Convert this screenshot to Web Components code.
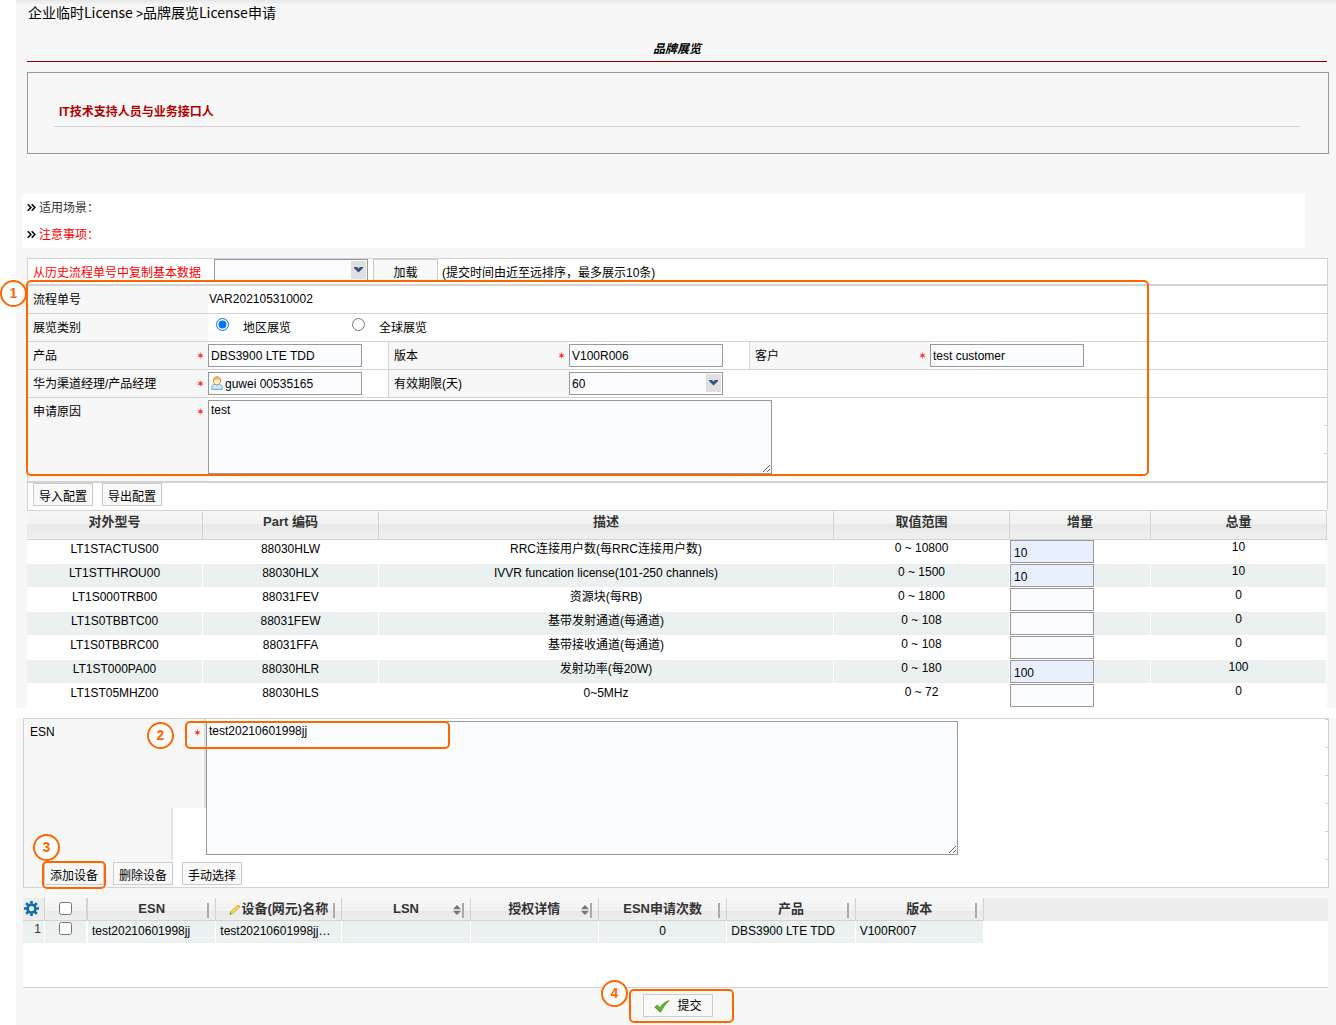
<!DOCTYPE html>
<html lang="zh-CN">
<head>
<meta charset="utf-8">
<title>品牌展览License申请</title>
<style>
  html, body { height: 100%; }
  body {
    margin: 0; background: #fff; color: #000;
    font: 12px/18px "Liberation Sans", "Noto Sans CJK SC", sans-serif;
    --line: #d3d3d3; --panel: #f7f7f7; --edge: #999; --field: #fbfcff; --mark: #f60; --tint: #ebf1f1;
  }
</style>
</head>
<body>
<license-page>
  <page-head slot="request" caption="品牌展览">企业临时License <small>&gt;</small>品牌展览License申请</page-head>
  <contact-box slot="request">IT技术支持人员与业务接口人</contact-box>
  <note-list slot="request">
    <note-line>适用场景：</note-line>
    <note-line tone="alert">注意事项：</note-line>
  </note-list>
  <request-form slot="request"></request-form>
  <quantity-table slot="request"></quantity-table>
  <esn-panel slot="devices"></esn-panel>
  <device-grid slot="devices"></device-grid>
  <submit-bar slot="devices"></submit-bar>
</license-page>

<script>
const SHARED = `
  *, *::before, *::after { box-sizing: border-box; }
  input, select, textarea, button { font: inherit; color: inherit; margin: 0; border-radius: 0; }
`;

function define(name, render) {
  customElements.define(name, class extends HTMLElement {
    constructor() { super(); this.attachShadow({ mode: "open" }); }
    connectedCallback() {
      if (this.shadowRoot.childNodes.length) return;
      const t = document.createElement("template");
      t.innerHTML = `<style>${SHARED}</style>` + render(this);
      this.shadowRoot.append(t.content.cloneNode(true));
    }
  });
}
const attr = (el, n, d = "") => el.getAttribute(n) ?? d;

define("license-page", () => `
  <style>
    :host { display: flex; flex-direction: column; min-height: 100%; padding-left: 16px; gap: 10px; box-sizing: border-box; }
    section { background: var(--panel); }
    .request { background: linear-gradient(#e6e6e6, var(--panel) 5px); }
    .devices { flex: 1; }
  </style>
  <section class="request"><slot name="request"></slot></section>
  <section class="devices"><slot name="devices"></slot></section>`);

define("page-head", el => `
  <style>
    :host { display: block; margin: 0 9px 0 11px; padding-top: 2px; }
    nav { font: 14px/20px "Noto Sans CJK SC", sans-serif; padding-left: 1px; white-space: pre; }
    ::slotted(small) { font: 12px/14px "Liberation Sans", sans-serif; }
    h1 { margin: 17px 0 0; padding-bottom: 4px; border-bottom: 1px solid #8b0000; font: italic bold 12px/18px "Noto Sans CJK SC", sans-serif; text-align: center; }
  </style>
  <nav><slot></slot></nav>
  <h1>${attr(el, "caption")}</h1>`);

define("contact-box", () => `
  <style>
    :host { display: block; margin: 10px 7px 0 11px; border: 1px solid var(--edge); padding: 27px 28px 26px 26px; }
    h2 { margin: 0; padding: 3px 5px 5px; border-bottom: 1px solid var(--line); font-size: 12px; line-height: 18px; font-weight: bold; color: #b30000; }
  </style>
  <h2><slot></slot></h2>`);

define("note-list", () => `
  <style>:host { display: block; margin: 40px 31px 10px 6px; background: #fff; padding-left: 5px; }</style>
  <slot></slot>`);

define("note-line", el => `
  <style>
    :host { display: flex; align-items: center; gap: 3px; height: 27px; color: #333; }
    :host([tone="alert"]) { color: #f00; }
  </style>
  <svg width="9" height="9" viewBox="0 0 9 9" fill="none" stroke="#000" stroke-width="1.5"><path d="M.7 1.2 3.9 4.5.7 7.8M4.7 1.2 7.9 4.5 4.7 7.8"/></svg>
  <span><slot></slot></span>`);

/* Numbered callout: the disc, placed by its parent over the form */
define("step-badge", () => `
  <style>
    :host { display: flex; position: absolute; z-index: 2; box-sizing: border-box; width: 27px; height: 27px; border: 2px solid var(--mark);
      border-radius: 50%; background: #fff; color: var(--mark); font: bold 14px/23px "Liberation Sans", sans-serif; justify-content: center; }
  </style><slot></slot>`);

/* Rounded outline that surrounds the part a step speaks of */
define("step-frame", () => `
  <style>:host { display: block; position: absolute; z-index: 1; box-sizing: border-box; border: 2px solid var(--mark); border-radius: 5px; pointer-events: none; }</style>`);

define("required-mark", () => `
  <style>:host { display: block; width: 7px; height: 7px; } svg { display: block; }</style>
  <svg width="7" height="7" viewBox="0 0 7 7" stroke="#f77" stroke-width="1.2"><path d="M3.5.6v5.800M1 2l5 3M1 5l5-3"/><circle cx="3.5" cy="3.5" r="1.600" fill="#f33" stroke="none"/></svg>`);

define("tool-button", () => `
  <style>
    :host { display: block; }
    button { display: flex; align-items: center; justify-content: center; gap: 7px; height: 23px; min-width: 60px; width: 100%; padding: var(--drop, 5px) 0 0;
      border: 1px solid #ccc; background: #f9f9f9; line-height: 18px; white-space: nowrap; }
  </style>
  <button type="button"><slot name="icon"></slot><span><slot></slot></span></button>`);

const CONTROL = `
  .box { width: 154px; height: 23px; border: 1px solid var(--edge); background: var(--field); padding: 0 2px; line-height: 18px; outline: 0; }
  select.box { appearance: none; padding: 0 20px 0 2px;
    background: url("data:image/svg+xml,%3Csvg xmlns='http://www.w3.org/2000/svg' width='15' height='18'%3E%3Crect width='15' height='18' fill='%23e0e0e0'/%3E%3Cpath d='M3 6h3l1.500 1.500L9 6h3v1L7.500 11.500 3 7z' fill='%23335090'/%3E%3C/svg%3E") no-repeat right 1px top 1px var(--field); }
`;

/* One label cell and one control cell of the form */
define("form-field", el => {
  const kind = attr(el, "kind", "text"), v = attr(el, "value");
  const control = {
    text: `<input class="box" id="c" type="text" value="${v}">`,
    person: `<span class="person"><input class="box" id="c" type="text" value="${v}">
      <svg width="12" height="14" viewBox="0 0 12 14"><path d="M.8 13.300V11.500c0-1.800 1.200-2.800 2.700-3.200h5c1.500.4 2.700 1.400 2.700 3.200v1.800z" fill="#cfeafd" stroke="#4fa3ea"/><path d="M2.500 4.600C2.500 2 4 .8 6 .8s3.500 1.200 3.500 3.800S8 9 6 9 2.500 7.200 2.500 4.600z" fill="#fff0d0" stroke="#d1861a"/><path d="M2.600 4.500C2.600 2 4 1 6 1s3.400 1 3.400 3.500C8 3.300 4.500 3.300 2.600 4.500z" fill="#f5b64c"/></svg></span>`,
    select: `<select class="box" id="c"><option>${v}</option></select>`,
    area: `<textarea id="c">${v}</textarea>`,
    output: `<output id="c">${v}</output>`,
    choice: `<input type="radio" name="r" id="r0" checked><label for="r0">地区展览</label><input type="radio" name="r" id="r1"><label for="r1">全球展览</label>`
  }[kind];
  const title = kind === "choice" ? `<span>${attr(el, "label")}</span>` : `<label for="c">${attr(el, "label")}</label>`;
  return `
  <style>
    ${CONTROL}
    :host { display: flex; min-height: 27px; }
    :host([ruled]) { border-right: 1px solid var(--line); }
    .name { flex: none; width: 180px; background: var(--panel); display: flex; justify-content: space-between; padding: 5px 4px 0 5px; }
    required-mark { margin-top: 5px; }
    .value { flex: 1; min-width: 180px; padding-top: 2px; display: flex; align-items: flex-start; }
    .value.output { padding: 4px 1px; }
    .value.choice { padding-top: 4px; }
    .value.choice input { width: 13px; height: 13px; margin: 0 14px 0 8px; }
    .value.choice label { width: 101px; padding-top: 1px; }
    .value.area { padding-bottom: 7px;
      background: repeating-linear-gradient(transparent 0 27px, var(--line) 27px 28px) right / 3px 100% no-repeat; }
    textarea { width: 564px; height: 74px; border: 1px solid var(--edge); background: var(--field); padding: 0 2px; line-height: 18px; }
    .person { position: relative; display: flex; }
    .person .box { padding-left: 16px; }
    .person svg { position: absolute; left: 3px; top: 4px; }
  </style>
  <div class="name">${title}${el.hasAttribute("required") ? "<required-mark></required-mark>" : ""}</div>
  <div class="value ${kind}">${control}</div>`;
});

define("request-form", () => `
  <style>
    ${CONTROL}
    :host { display: block; position: relative; margin: 0 8px 0 11px; background: #fff; border: 1px solid var(--line); border-bottom: 0; }
    .row { display: flex; border-bottom: 1px solid var(--line); }
    .row > form-field:last-child { flex: 1; }
    .copy { height: 27px; border-bottom-width: 2px; align-items: flex-start; }
    .copy label { width: 186px; padding: 5px 0 0 5px; color: #f00; }
    .copy tool-button { width: 65px; margin: 0 4px 0 5px; }
    .copy span { padding-top: 5px; }
    .last { border-bottom-width: 2px; }
    .tools { display: flex; gap: 9px; height: 27px; padding-left: 5px; }
    step-frame { left: -2px; top: 21px; width: 1123px; height: 196px; }
    step-badge { left: -28px; top: 21px; }
  </style>
  <div class="row copy">
    <label for="history">从历史流程单号中复制基本数据</label>
    <select class="box" id="history"><option></option></select>
    <tool-button>加载</tool-button>
    <span>(提交时间由近至远排序，最多展示10条)</span>
  </div>
  <div class="row"><form-field kind="output" label="流程单号" value="VAR202105310002"></form-field></div>
  <div class="row"><form-field kind="choice" label="展览类别"></form-field></div>
  <div class="row">
    <form-field label="产品" value="DBS3900 LTE TDD" required ruled></form-field>
    <form-field label="版本" value="V100R006" required ruled></form-field>
    <form-field label="客户" value="test customer" required></form-field>
  </div>
  <div class="row">
    <form-field kind="person" label="华为渠道经理/产品经理" value="guwei 00535165" required ruled></form-field>
    <form-field kind="select" label="有效期限(天)" value="60"></form-field>
  </div>
  <div class="row last"><form-field kind="area" label="申请原因" value="test" required></form-field></div>
  <div class="tools"><tool-button>导入配置</tool-button><tool-button>导出配置</tool-button></div>
  <step-frame></step-frame><step-badge>1</step-badge>`);

const HEAD_FILL = "linear-gradient(#f7f7f7, #f2f2f2 45%, #e8e8e8 46%, #ededed 76%, #eee)";

const ITEMS = [
  ["LT1STACTUS00", "88030HLW", "RRC连接用户数(每RRC连接用户数)", "0 ~ 10800", "10", "10"],
  ["LT1STTHROU00", "88030HLX", "IVVR funcation license(101-250 channels)", "0 ~ 1500", "10", "10"],
  ["LT1S000TRB00", "88031FEV", "资源块(每RB)", "0 ~ 1800", "", "0"],
  ["LT1S0TBBTC00", "88031FEW", "基带发射通道(每通道)", "0 ~ 108", "", "0"],
  ["LT1S0TBBRC00", "88031FFA", "基带接收通道(每通道)", "0 ~ 108", "", "0"],
  ["LT1ST000PA00", "88030HLR", "发射功率(每20W)", "0 ~ 180", "100", "100"],
  ["LT1ST05MHZ00", "88030HLS", "0~5MHz", "0 ~ 72", "", "0"]
];

define("quantity-table", () => `
  <style>
    :host { display: block; margin: 0 9px 0 11px; background: #fff; }
    table { width: 100%; table-layout: fixed; border-collapse: separate; border-spacing: 0; text-align: center; }
    .c { width: 176px; } .n { width: 141px; }
    th { height: 30px; padding: 0 0 6px; border: solid var(--line); border-width: 1px 1px 1px 0; background: ${HEAD_FILL}; font-size: 13px; line-height: 18px; color: #333; }
    td { height: 24px; padding: 0; vertical-align: top; border: solid #fff; border-width: 0 1px 1px 0; line-height: 18px; }
    tr:nth-child(even) td { background: var(--tint); }
    td:nth-child(4) { line-height: 16px; }
    td:nth-child(6) { line-height: 14px; }
    td:nth-child(5) { text-align: left; }
    input { display: block; width: 84px; height: 23px; border: 1px solid var(--edge); background: var(--field); padding: 2px 3px 0; }
    input.filled { background: #e8f0fe; }
  </style>
  <table>
    <colgroup><col class="c"><col class="c"><col><col class="c"><col class="n"><col class="c"></colgroup>
    <thead><tr><th>对外型号</th><th>Part 编码</th><th>描述</th><th>取值范围</th><th>增量</th><th>总量</th></tr></thead>
    <tbody>${ITEMS.map(r => `<tr>${r.map((v, i) => i === 4
      ? `<td><input type="text" aria-label="增量 ${r[0]}" value="${v}"${v ? ' class="filled"' : ""}></td>`
      : `<td>${v}</td>`).join("")}</tr>`).join("")}</tbody>
  </table>`);

define("esn-panel", () => `
  <style>
    :host { display: block; position: relative; margin: 0 7px 0 7px; border: 1px solid var(--line);
      background: linear-gradient(var(--panel), var(--panel)) left / 149px 100% no-repeat,
        repeating-linear-gradient(var(--line) 0 1px, transparent 1px 28px) right top / 3px 142px no-repeat, #fff; }
    .entry { display: flex; }
    .name { width: 182px; display: flex; flex-direction: column; }
    .name div { height: 89px; background: var(--panel); display: flex; justify-content: space-between; padding: 4px 3px 0 6px; border-right: 2px solid #ddd; }
    .name div required-mark { margin-top: 6px; }
    .name i { width: 149px; height: 52px; border-right: 2px solid #e6e6e6; }
    textarea { margin: 2px 0 0; width: 752px; height: 134px; border: 1px solid var(--edge); background: var(--field); padding: 0 2px; line-height: 18px; }
    .tools { display: flex; gap: 9px; margin: 2px 0 2px 20px; }
    .key { position: relative; }
    .key step-frame { inset: -1px -2px -4px; }
    .key step-badge { left: -11px; top: -28px; }
    .value-frame { left: 161px; top: 2px; width: 265px; height: 28px; }
    .value-badge { left: 123px; top: 3px; }
  </style>
  <div class="entry">
    <div class="name"><div><label for="esn">ESN</label><required-mark></required-mark></div><i></i></div>
    <textarea id="esn">test20210601998jj</textarea>
  </div>
  <div class="tools">
    <div class="key"><tool-button>添加设备</tool-button><step-frame></step-frame><step-badge>3</step-badge></div>
    <tool-button>删除设备</tool-button><tool-button>手动选择</tool-button>
  </div>
  <step-frame class="value-frame"></step-frame><step-badge class="value-badge">2</step-badge>`);

const SORT = `<svg class="sort" width="8" height="10" viewBox="0 0 8 10" fill="#777"><path d="M4 0 8 4.300H0zM0 5.700h8L4 10z"/></svg>`;
const PENCIL = `<svg class="pen" width="12" height="11" viewBox="0 0 12 11"><path d="M1.200 9.900 2.200 7 8.500 1.200 10.800 3.200 4.200 9.200z" fill="#fbd24a" stroke="#d9a02a" stroke-width=".7"/><path d="M8.500 1.200c1-1 3 .8 2.300 2z" fill="#e88b6a"/><path d="M.5 10.600 1.300 8.800 2.700 10z" fill="#555"/></svg>`;

define("device-grid", () => `
  <style>
    :host { display: block; margin: 10px 8px 0 7px; background: linear-gradient(#ededed, #ededed) top / 100% 23px no-repeat, #fff; min-height: 89px; border-bottom: 1px solid var(--line); }
    table { width: 961px; table-layout: fixed; border-collapse: separate; border-spacing: 0; background: #fff; }
    .g { width: 22px; } .k { width: 43px; } .d { width: 126px; }
    th, td { padding: 0; line-height: 18px; white-space: nowrap; overflow: hidden; }
    th { height: 23px; border: solid var(--line); border-width: 0 1px 1px 0; background: linear-gradient(#f7f7f7, #f2f2f2 58%, #e9e9e9 60%, #eee); font-size: 13px; color: #333; }
    th div { display: flex; align-items: center; justify-content: center; position: relative; height: 22px; }
    th:first-child { background: #ededed; }
    th:nth-child(2) { border-right-width: 2px; }
    th:nth-child(-n+2) div { padding-bottom: 2px; }
    .grip { position: absolute; right: 6px; top: 5px; width: 2px; height: 15px; background: #aaa; }
    .sort { position: absolute; right: 9px; top: 7px; }
    td { height: 22px; vertical-align: top; background: var(--tint); border-right: 1px solid #fff; padding: 1px 4px; text-overflow: ellipsis; }
    td:first-child { text-align: right; padding: 0 3px; line-height: 16px; color: #333; }
    td:nth-child(2) { padding: 1px 0; border-right-width: 2px; }
    td.num { text-align: center; }
    input { display: block; width: 13px; height: 13px; margin: 0 auto; }
    th input { margin: 0; }
    .gear { display: block; margin-right: 4px; flex: none; }
  </style>
  <table>
    <colgroup><col class="g"><col class="k"><col><col class="d"><col span="5"></colgroup>
    <thead><tr>
      <th><div><svg class="gear" width="15" height="15" viewBox="0 0 16 16" fill="none" stroke="#0b6fae"><circle cx="8" cy="8" r="4.200" stroke-width="2.800"/><path stroke-width="2.800" d="M8 0v3M8 13v3M0 8h3M13 8h3M2.300 2.300l2.200 2.200M11.500 11.500l2.200 2.200M2.300 13.700l2.200-2.200M11.500 4.500l2.200-2.200"/></svg></div></th>
      <th><div><input type="checkbox" aria-label="全选"></div></th>
      ${[["ESN"], ["设备(网元)名称", PENCIL], ["LSN", "", SORT], ["授权详情", "", SORT], ["ESN申请次数"], ["产品"], ["版本"]]
        .map(([t, lead = "", tail = ""]) => `<th><div>${lead}<span>${t}</span>${tail}<i class="grip"></i></div></th>`).join("")}
    </tr></thead>
    <tbody><tr>
      <td>1</td><td><input type="checkbox" aria-label="选择第1行"></td>
      <td>test20210601998jj</td><td>test20210601998jj…</td><td></td><td></td><td class="num">0</td><td>DBS3900 LTE TDD</td><td>V100R007</td>
    </tr></tbody>
  </table>`);

define("submit-bar", () => `
  <style>
    :host { display: flex; justify-content: center; padding: 6px 0 8px 4px; }
    .key { position: relative; }
    tool-button { width: 70px; --drop: 1px; }
    step-frame { inset: -5px -21px -6px -14px; }
    step-badge { left: -42px; top: -14px; }
  </style>
  <div class="key">
    <tool-button><svg slot="icon" width="16" height="13" viewBox="0 0 16 13"><path d="M.8 7.200 3.300 5l2.600 2.700C8 4.600 11 2 15 .6 11.500 4 8.600 8.200 6.400 12.300z" fill="#5cb531" stroke="#3f8f1f" stroke-width=".8"/></svg>提交</tool-button>
    <step-frame></step-frame><step-badge>4</step-badge>
  </div>`);
</script>
</body>
</html>
